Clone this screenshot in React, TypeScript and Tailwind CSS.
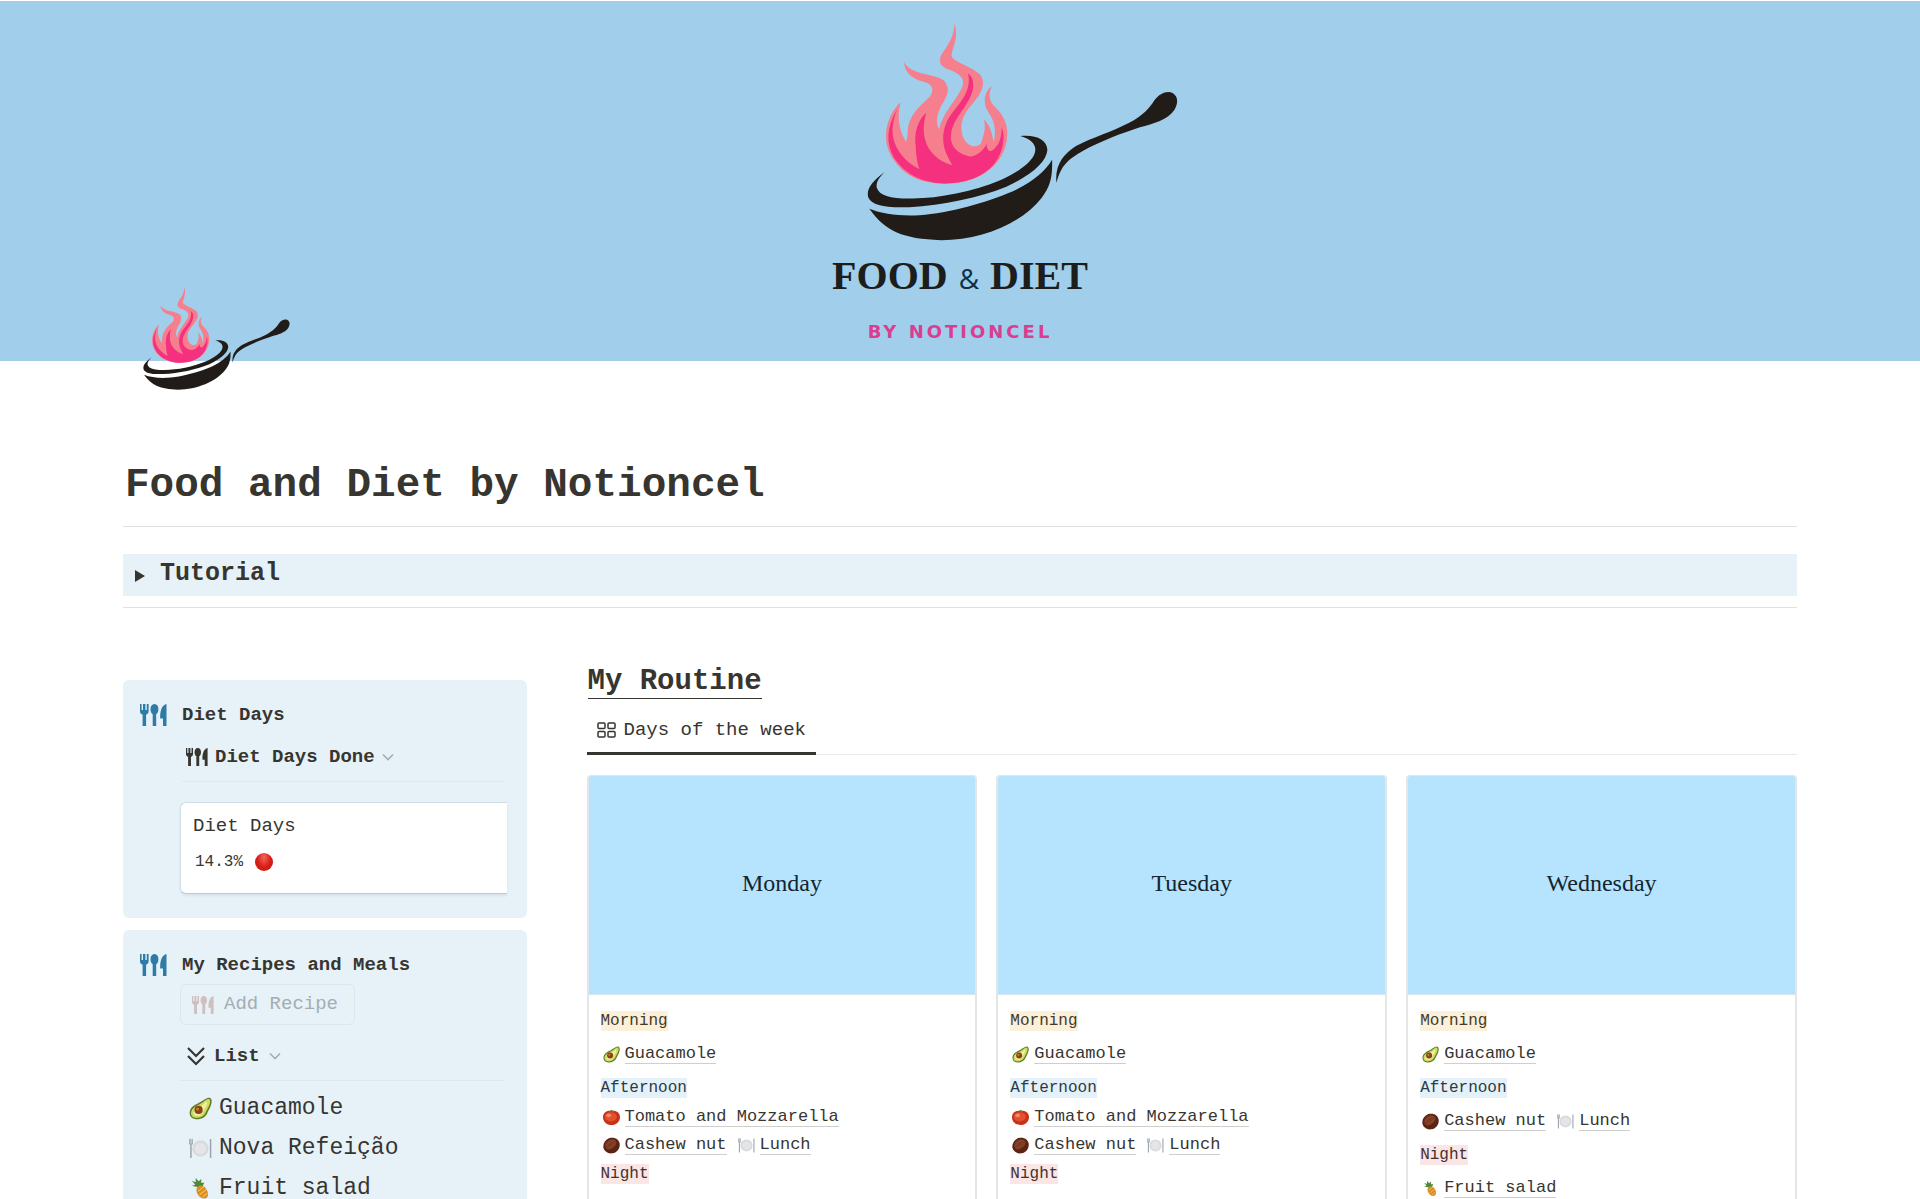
import type { ReactNode } from 'react'

type FoodKind = 'avocado' | 'tomato' | 'nut' | 'plate' | 'pineapple'

type Meal = { icon: FoodKind; name: string }

type Period = { label: string; tone: keyof typeof TONES; rows: Meal[][] }

const TONES = {
  yellow: 'bg-[#fbf0da] text-[#453a28]',
  blue: 'bg-[#e5f1f9] text-[#2b3a42]',
  red: 'bg-[#fbe6e6] text-[#45302f]',
}

const guacamole: Meal = { icon: 'avocado', name: 'Guacamole' }
const tomato: Meal = { icon: 'tomato', name: 'Tomato and Mozzarella' }
const cashew: Meal = { icon: 'nut', name: 'Cashew nut' }
const lunch: Meal = { icon: 'plate', name: 'Lunch' }
const fruitSalad: Meal = { icon: 'pineapple', name: 'Fruit salad' }

const DAYS: { name: string; periods: Period[] }[] = [
  {
    name: 'Monday',
    periods: [
      { label: 'Morning', tone: 'yellow', rows: [[guacamole]] },
      { label: 'Afternoon', tone: 'blue', rows: [[tomato], [cashew, lunch]] },
      { label: 'Night', tone: 'red', rows: [] },
    ],
  },
  {
    name: 'Tuesday',
    periods: [
      { label: 'Morning', tone: 'yellow', rows: [[guacamole]] },
      { label: 'Afternoon', tone: 'blue', rows: [[tomato], [cashew, lunch]] },
      { label: 'Night', tone: 'red', rows: [] },
    ],
  },
  {
    name: 'Wednesday',
    periods: [
      { label: 'Morning', tone: 'yellow', rows: [[guacamole]] },
      { label: 'Afternoon', tone: 'blue', rows: [[cashew, lunch]] },
      { label: 'Night', tone: 'red', rows: [[fruitSalad]] },
    ],
  },
]

const RECIPES: Meal[] = [guacamole, { icon: 'plate', name: 'Nova Refeição' }, fruitSalad]

/** Frying pan with a flame, used on the cover and as the page icon */
function PanLogo({ className }: { className: string }) {
  return (
    <svg viewBox="203 70 931 652" className={className} aria-hidden="true">
      <path
        fill="#f67f8d"
        d="M303 308C268 340 248 400 268 452C295 515 350 551 440 551C530 549 595 508 617 440C632 390 618 352 590 325C564 300 567 280 577 258C552 275 550 310 565 335C590 370 588 398 583 425C575 402 576 380 552 358C562 385 550 408 545 430C530 446 502 440 490 410C478 370 490 345 520 310C550 275 560 245 540 222C510 198 472 190 457 172C453 150 480 120 465 72C463 112 447 133 430 158C415 180 418 198 445 208C482 220 498 238 488 262C468 305 428 340 419 388C410 375 408 345 430 310C445 285 452 265 435 243C410 225 370 225 350 215C325 205 318 195 314 185C315 217 335 235 370 245C400 253 405 268 392 290C365 315 328 345 325 392C324 410 322 418 320 426C305 400 290 365 303 308Z"
      />
      <path
        fill="#f4307f"
        d="M293 328C262 380 258 430 285 475C330 540 400 550 440 550C540 548 600 500 610 430C613 410 612 395 606 382C606 412 600 438 575 453C563 453 560 440 562 428C555 450 530 470 510 469C478 463 448 440 455 400C462 345 530 300 520 245C518 232 512 225 505 220C517 262 490 300 465 330C430 370 420 420 445 470C449 480 454 486 458 495C418 485 382 452 375 410C370 380 375 360 380 338C355 360 343 400 349 440C350 470 354 490 360 507C320 487 287 450 281 410C276 382 284 352 293 328Z"
      />
      <path
        fill="#211c17"
        d="M258 514C215 545 200 570 207 592C218 616 260 624 330 621C430 616 540 592 620 560C700 522 740 485 743 450C742 418 708 403 662 408C702 420 714 440 703 465C690 492 650 519 600 541C520 574 420 594 340 595C275 596 240 588 232 562C230 545 240 530 258 514Z"
      />
      <path
        fill="#211c17"
        d="M210 626C250 642 300 648 360 645C450 638 560 607 640 573C700 545 738 512 757 479C759 530 752 560 725 594C665 670 545 719 425 720C310 716 258 694 210 626Z"
      />
      <path
        fill="#211c17"
        d="M770 548C765 495 790 462 830 437C880 412 935 396 985 370C1030 347 1050 322 1062 303C1080 278 1102 272 1118 279C1136 290 1134 312 1123 330C1105 358 1060 372 1020 382C970 398 900 425 850 452C802 480 785 495 770 548Z"
      />
    </svg>
  )
}

function Utensils({ className }: { className: string }) {
  return (
    <svg viewBox="0 0 27 22" className={className} fill="currentColor" aria-hidden="true">
      <path d="M0 0h1.6v6h1.4V0h2.4v6h1.4V0h1.8v7.2c0 2-1 3-2.500 3.400V22H2.600V10.600C1 10.200 0 9.200 0 7.200Z" />
      <path d="M14.500 0C17 0 18.400 2.200 18.400 5.200c0 2.400-.8 4.200-2.200 5V22h-3.500V10.200c-1.400-.8-2.200-2.600-2.200-5C10.500 2.200 12 0 14.500 0Z" />
      <path d="M26.500 0v22H23v-7.500h-2.800C20 8 21 1.500 26.500 0Z" />
    </svg>
  )
}

function Chevron() {
  return (
    <svg viewBox="0 0 12 8" className="h-2 w-3 text-[#a3adb3]" fill="none" stroke="currentColor" strokeWidth="1.6" aria-hidden="true">
      <path d="M1 1.500l5 5 5-5" />
    </svg>
  )
}

const FOOD_ART: Record<FoodKind, ReactNode> = {
  avocado: (
    <>
      <path fill="#5f7c28" d="M22 1c2 1 2 4 1 7c-1 4-3 6-4 9c-2 5-8 7-13 6C1 22-1 17 2 12C5 8 10 7 14 4c3-2 6-4 8-3Z" />
      <path fill="#cfdc62" d="M21 2.200c1.500 1 1.200 3.300.5 5.300c-1 3.500-3 5.500-4 8.500c-2 4.800-7 6.300-11 5.600C2 20.800 1 16.500 3.500 12.700c3-3.500 7-4.200 11-7.200c2.500-2 5-4 6.500-3.300Z" />
      <path fill="#eef0a4" d="M18.500 5c.7.6.3 2-.3 3.500c-.8 2.500-2.400 4-3.300 6.500c-1.500 3.500-4 5-7.400 4.500C4.500 19 4 16.500 5.500 14c2-2.500 5.500-3 8.500-5.500c2-1.500 3.500-4 4.500-3.500Z" />
      <circle cx="10" cy="13.500" r="4.300" fill="#8a4315" />
      <circle cx="9" cy="12.500" r="1.600" fill="#c47a3d" />
    </>
  ),
  tomato: (
    <>
      <path fill="#c93119" d="M12 2.500c7-1 12 3 12 9s-5 11-12 11s-12-5-12-11s5-10 12-9Z" />
      <ellipse cx="11" cy="11" rx="8.500" ry="6.500" fill="#e3502f" />
      <ellipse cx="8" cy="9" rx="3.500" ry="2.500" fill="#f28a68" />
      <path fill="#5b7a2a" d="M12 4.500L7 4l3.500-1.500L12 1l1.500 1.500L17 4Z" />
    </>
  ),
  nut: (
    <>
      <path fill="#5a2413" d="M9 1.500c7-2 13 1 14.500 7.500c1 6.500-3 13-10 14c-7 1-12-3-13-8.500C0 9 3 4 9 1.500Z" />
      <path fill="#7c3a24" d="M9 4c4-2 9.500 0 10 3.500c.5 4.500-4.500 9-9.500 10c-4 .5-6.500-2-6.500-5.500C3 8 5.500 5.500 9 4Z" />
      <path fill="none" stroke="#985038" strokeWidth="1" d="M5 12c2-4 6-7 11-7M6 16c4-1 9-4 12-8" />
    </>
  ),
  plate: (
    <>
      <circle cx="12" cy="12" r="8.500" fill="#d9dade" />
      <circle cx="12" cy="12" r="6" fill="#e4e4e9" />
      <path fill="none" stroke="#98a1ab" strokeWidth="1.500" d="M2 8v14M22.500 2v20" />
      <path fill="none" stroke="#98a1ab" strokeWidth="1" d="M.7 2v5.500h2.800V2M2 2v6" />
    </>
  ),
  pineapple: (
    <>
      <path fill="#4c8a35" d="M11 11L3 9l3.500-1L3 4l4 1.500L7 1l3 3.500L13 2l-.5 4L16 6l-2 4Z" />
      <path fill="#d98c25" d="M9 10.500c3-3 7-1.500 9 2c2.500 4 2.500 8 0 9.500c-3 1.500-7-.5-9-4c-1.500-3-2-5.500 0-7.500Z" />
      <path fill="none" stroke="#f5c254" strokeWidth="1.200" d="M9.500 15l6-5M11 18.500l7-5.500M14 21l5-4" />
    </>
  ),
}

function FoodIcon({ kind, className }: { kind: FoodKind; className: string }) {
  return (
    <svg viewBox="0 0 24 24" className={className} aria-hidden="true">
      {FOOD_ART[kind]}
    </svg>
  )
}

function Cover() {
  return (
    <header className="flex h-[361px] flex-col items-center border-t border-white bg-[#a0ceeb]">
      <PanLogo className="mt-[22px] ml-[124px] h-[218px] w-[311px] shrink-0" />
      <p className="mt-2.5 flex items-center gap-[11px] font-['Liberation_Serif',serif] text-[40px] leading-[46px] font-bold text-[#1d1d1b]">
        FOOD <span className="pt-1 font-['Open_Sans',sans-serif] text-[28px] font-normal text-[#14303f]">&amp;</span> DIET
      </p>
      <p className="mt-[17px] font-['DejaVu_Sans',sans-serif] text-lg font-bold tracking-[3px] text-[#dc3d90]">
        BY NOTIONCEL
      </p>
    </header>
  )
}

function Callout({ title, children }: { title: string; children: ReactNode }) {
  return (
    <section className="flex items-start gap-[15px] rounded-md bg-[#e6f2f8] pt-6 pr-5 pb-6 pl-[17px]">
      <Utensils className="h-[22px] w-[27px] shrink-0 text-[#2f7ba8]" />
      <div className="min-w-0 flex-1">
        <h3 className="text-[19px] leading-[22px] font-bold">{title}</h3>
        {children}
      </div>
    </section>
  )
}

function DietDays() {
  return (
    <Callout title="Diet Days">
      <button type="button" className="mt-[19px] ml-1 flex items-center gap-[7px] text-[19px] leading-6 font-bold">
        <Utensils className="h-5 w-[22px]" />
        <span>Diet Days Done</span>
        <Chevron />
      </button>
      <hr className="mt-3 mr-[3px] border-[#dde9ef]" />
      <div className="mt-5 -ml-0.5 h-[92px] rounded-l-md border-y border-l border-[#cfdde4] border-b-[#bccbd3] bg-white px-3 pt-[11px] shadow-[0_2px_3px_#0000000f]">
        <p className="text-[19px] leading-6">Diet Days</p>
        <p className="mt-3 flex items-center gap-3 pl-0.5 text-base leading-6">
          14.3%
          <span className="size-[18px] rounded-full bg-radial-[at_50%_25%] from-[#f0675a] via-[#dc1f18] to-[#bd1512]" />
        </p>
      </div>
    </Callout>
  )
}

function Recipes() {
  return (
    <Callout title="My Recipes and Meals">
      <button
        type="button"
        disabled
        className="mt-2 -ml-0.5 flex h-[41px] items-center gap-2.5 rounded-md border border-[#dbe7ed] pr-4 pl-[11px] text-[19px] text-[#a3adb2]"
      >
        <Utensils className="h-5 w-[22px] text-[#cfc0bd]" />
        Add Recipe
      </button>
      <button type="button" className="mt-[19px] ml-[5px] flex items-center gap-[9px] text-[19px] leading-6 font-bold">
        <svg viewBox="0 0 18 19" className="h-[19px] w-[18px]" fill="none" stroke="currentColor" strokeWidth="2.2" aria-hidden="true">
          <path d="M1 1l8 8 8-8M1 9l8 8 8-8" />
        </svg>
        <span>List</span>
        <Chevron />
      </button>
      <hr className="mt-3 mr-[3px] -ml-0.5 border-[#dde9ef]" />
      <ul className="mt-[7px] ml-[7px]">
        {RECIPES.map((recipe) => (
          <li key={recipe.name} className="flex h-10 items-center gap-[7px] text-[23px]">
            <FoodIcon kind={recipe.icon} className="size-[23px]" />
            <a href="#">{recipe.name}</a>
          </li>
        ))}
      </ul>
    </Callout>
  )
}

function DayCard({ name, periods }: { name: string; periods: Period[] }) {
  return (
    <article className="min-h-[440px] overflow-hidden rounded-t border-x-2 border-t border-[#e3e6e8] bg-white">
      <div className="flex h-[219px] items-center justify-center border-b border-[#d5e3ea] bg-[#b6e4fe] pb-1 font-['Liberation_Serif',serif] text-2xl text-[#142531]">
        {name}
      </div>
      <div className="px-3 pt-4">
        {periods.map((period) => (
          <section key={period.label}>
            <h4 className="flex text-base leading-5">
              <span className={TONES[period.tone]}>{period.label}</span>
            </h4>
            <div className="flex min-h-[47px] flex-col justify-center py-[5px] pl-0.5">
              {period.rows.map((row, i) => (
                <div key={i} className="flex h-7 items-center gap-[11px]">
                  {row.map((meal) => (
                    <a key={meal.name} href="#" className="flex items-center gap-[5px] text-[17px] leading-[18px]">
                      <FoodIcon kind={meal.icon} className="size-[17px]" />
                      <span className="border-b border-[#cfcfce]">{meal.name}</span>
                    </a>
                  ))}
                </div>
              ))}
            </div>
          </section>
        ))}
      </div>
    </article>
  )
}

function Routine() {
  return (
    <section className="mt-[57px] min-w-0">
      <h2 className="flex pl-px text-[29px] leading-[33px] font-bold">
        <span className="border-b border-[#373530]">My Routine</span>
      </h2>
      <div className="mt-[9px] flex border-b border-[#e9e9e8]">
        <button
          type="button"
          className="-mb-px flex h-[47px] items-center gap-2 border-b-[3px] border-[#373530] px-2.5 text-[19px]"
        >
          <svg viewBox="0 0 19 16" className="h-4 w-[19px]" fill="none" stroke="currentColor" strokeWidth="1.5" aria-hidden="true">
            <rect x="1" y="1" width="7" height="5.5" rx="1" />
            <rect x="11" y="1" width="7" height="5.5" rx="1" />
            <rect x="1" y="9.5" width="7" height="5.5" rx="1" />
            <rect x="11" y="9.5" width="7" height="5.5" rx="1" />
          </svg>
          Days of the week
        </button>
      </div>
      <div className="mt-5 grid grid-cols-3 gap-[19px]">
        {DAYS.map((day) => (
          <DayCard key={day.name} {...day} />
        ))}
      </div>
    </section>
  )
}

export default function App() {
  return (
    <div className="min-h-screen bg-white font-['Liberation_Mono',monospace] text-[#373530]">
      <Cover />
      <main className="px-[123px]">
        {/* Page icon hangs over the cover's lower edge */}
        <PanLogo className="relative -mt-[74px] ml-5 h-[103px] w-[147px]" />
        <h1 className="mt-[71px] pl-0.5 text-[41px] leading-[48px] font-bold">Food and Diet by Notioncel</h1>
        <hr className="mt-[17px] border-[#e0e0df]" />
        <button
          type="button"
          className="mt-[27px] flex h-[42px] w-full items-center gap-[15px] bg-[#e6f2f8] pb-0.5 pl-3 text-[25px] font-bold"
        >
          <svg viewBox="0 0 10 12" className="mt-1 h-3 w-2.5" fill="currentColor" aria-hidden="true">
            <path d="M0 0l10 6-10 6Z" />
          </svg>
          Tutorial
        </button>
        <hr className="mt-[11px] border-[#e0e0df]" />
        <div className="grid grid-cols-[1fr_3fr] gap-[60px]">
          <aside className="mt-[72px] flex min-w-0 flex-col gap-3">
            <DietDays />
            <Recipes />
          </aside>
          <Routine />
        </div>
      </main>
    </div>
  )
}
